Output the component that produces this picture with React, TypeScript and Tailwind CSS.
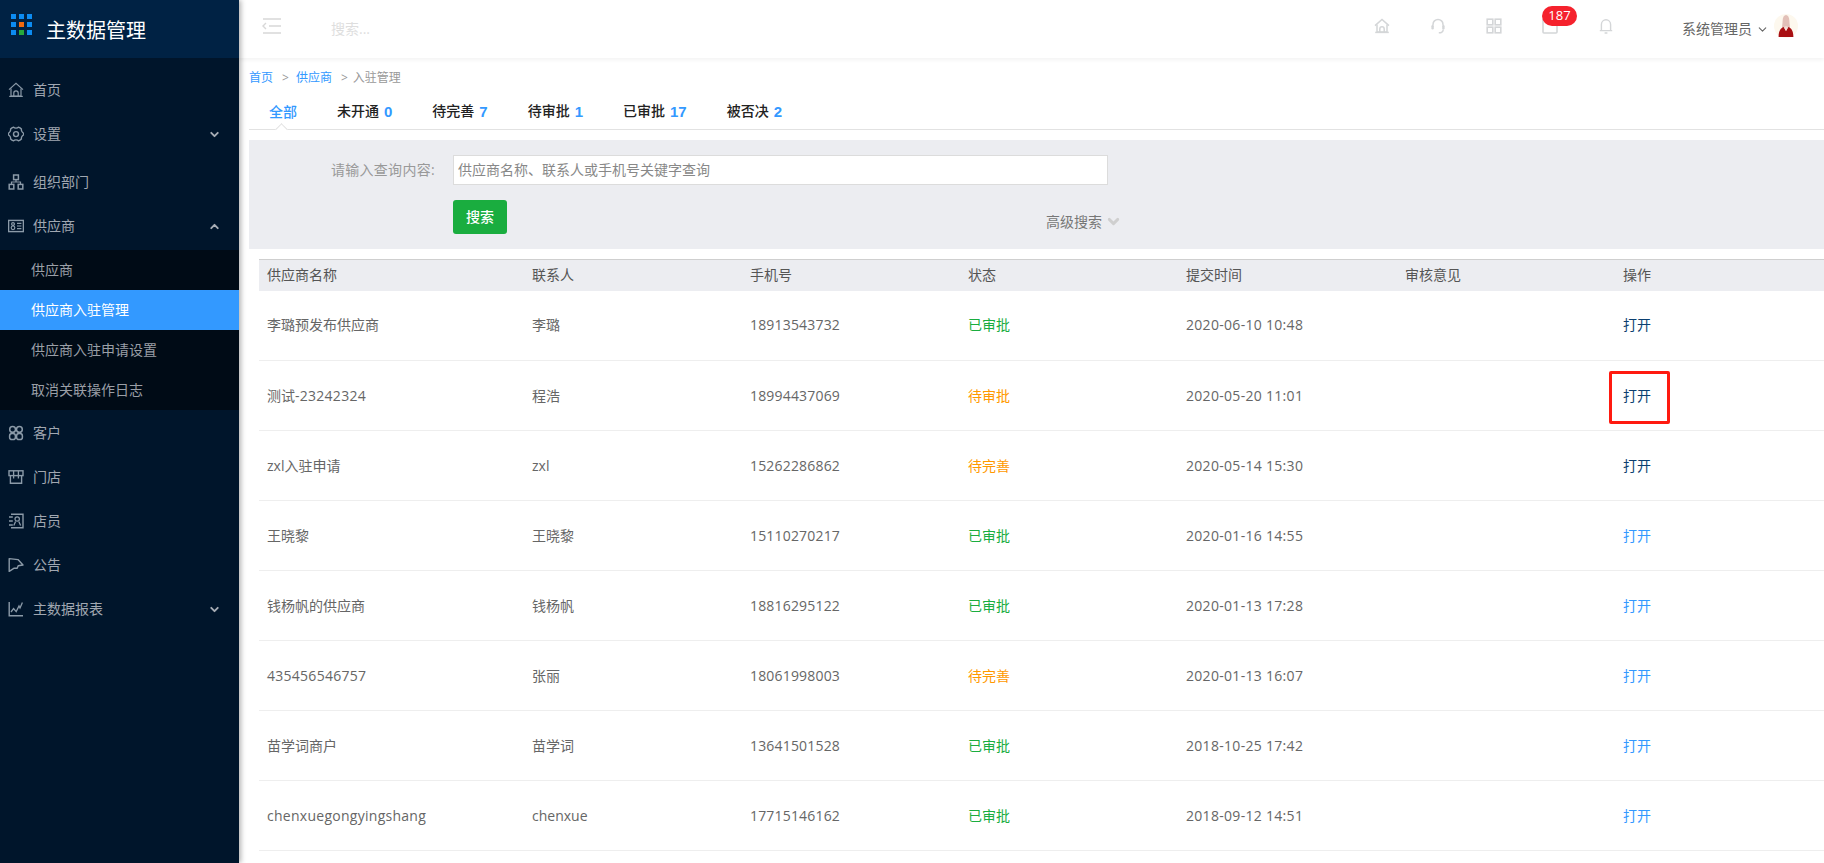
import { ChevronDown, ChevronUp } from "lucide-react"
import type { ReactNode } from "react"

const Ico = ({
    children,
    size = 16,
    weight = 1.2,
    className = ""
}: {
    children: ReactNode
    size?: number
    weight?: number
    className?: string
}) => (
    <svg
        width={size}
        height={size}
        viewBox="0 0 16 16"
        fill="none"
        stroke="currentColor"
        strokeWidth={weight}
        className={className}>
        {children}
    </svg>
)

const HomeIcon = (
    <>
        <path d="M1 7.6 8 1.4l7 6.2" />
        <path d="M3 6.4V14h10V6.4" />
        <path d="M5.8 14v-3a2.2 2.2 0 0 1 4.4 0v3" />
        <path d="M1.2 14.4h13.6" />
    </>
)

const menuIcons = {
    home: HomeIcon,
    gear: (
        <>
            <path
                d="M5.6 1.2c1 1.2 3.8 1.2 4.8 0 1.2.4 2.2 1 3 1.8-.4 1.4 1 3.8 2.2 4.2.1 1 .1 1.6 0 1.6-1.2.4-2.6 2.8-2.2 4.2-.8.8-1.8 1.4-3 1.8-1-1.2-3.8-1.2-4.8 0-1.2-.4-2.2-1-3-1.8.4-1.4-1-3.8-2.2-4.2V7.2C1.6 6.8 3 4.4 2.6 3c.8-.8 1.8-1.4 3-1.8z"
                strokeWidth="1.4"
            />
            <circle cx="8" cy="8.1" r="2.5" strokeWidth="1.4" />
        </>
    ),
    org: (
        <>
            <rect x="5.6" y="1" width="4.8" height="4.6" strokeWidth="1.5" />
            <rect x="1.2" y="10.4" width="4.6" height="4.6" strokeWidth="1.5" />
            <rect x="10.2" y="10.4" width="4.6" height="4.6" strokeWidth="1.5" />
            <path d="M8 5.6V8M3.5 10.4V8h9v2.4" />
        </>
    ),
    card: (
        <>
            <rect x="0.6" y="2.4" width="14.8" height="11.2" strokeWidth="1.4" />
            <circle cx="5" cy="6" r="1.4" />
            <circle cx="5" cy="9.8" r="1.8" />
            <path d="M9 5.4h4.4M9 8h4.4M9 10.6h4.4" />
        </>
    ),
    customer: (
        <>
            <circle cx="4.6" cy="4.4" r="2.9" strokeWidth="1.5" />
            <circle cx="11.4" cy="4.4" r="2.9" strokeWidth="1.5" />
            <rect x="1.6" y="8.6" width="5.8" height="6" rx="2.4" strokeWidth="1.5" />
            <rect x="8.6" y="8.6" width="5.8" height="6" rx="2.4" strokeWidth="1.5" />
        </>
    ),
    store: (
        <>
            <rect x="1" y="1.8" width="14" height="4.8" strokeWidth="1.4" />
            <path d="M5.6 1.8v7.8M10.4 1.8v7.8" strokeWidth="1.3" />
            <path d="M2.4 6.6v7.6h11.2V6.6" strokeWidth="1.4" />
        </>
    ),
    clerk: (
        <>
            <path d="M3 1.2h12v13.6H3" strokeWidth="1.4" />
            <path d="M1 4h3.8M1 8h3.8M1 12h3.8" strokeWidth="1.3" />
            <circle cx="9.2" cy="6" r="2.2" />
            <path d="M5.8 12.4 7.6 8.4M12.6 12.4l-1.8-4" strokeWidth="1.3" />
        </>
    ),
    notice: (
        <>
            <path d="M1.2 1.6v12.8l5-3.2h3l1-2.4L15 8l-5-5.4z" strokeWidth="1.4" strokeLinejoin="round" />
        </>
    ),
    chart: (
        <>
            <path d="M1.2 1v13.8H15" strokeWidth="1.4" />
            <path d="M3 11l2.6-3.4 2.6 3L11 5l1 2 2.4-5.6" strokeWidth="1.3" />
        </>
    )
}

type MenuKey = keyof typeof menuIcons

const MenuRow = ({
    icon,
    label,
    arrow,
    className = ""
}: {
    icon: MenuKey
    label: string
    arrow?: "up" | "down"
    className?: string
}) => (
    <div className={`flex h-[44px] items-center pl-2 pr-[18px] text-sm text-[#a0a7b1] ${className}`}>
        <Ico className="shrink-0 text-[#8b9aa8]">{menuIcons[icon]}</Ico>
        <span className="ml-[9px] flex-1">{label}</span>
        {arrow === "down" && <ChevronDown size={13} strokeWidth={3.5} className="text-[#a7adb5]" />}
        {arrow === "up" && <ChevronUp size={13} strokeWidth={3.5} className="text-[#a7adb5]" />}
    </div>
)

const Sidebar = () => (
    <aside className="z-20 flex h-[863px] w-[239px] shrink-0 flex-col bg-[#00152b] shadow-[2px_0_5px_rgba(0,0,0,0.3)]">
        <div className="flex h-[58px] items-center bg-[#002244] pl-[11px]">
            <svg width="21" height="21" viewBox="0 0 21 21" className="-mt-[10px]">
                {[0, 8, 16].map(y =>
                    [0, 8, 16].map(x => (
                        <rect
                            key={`${x}-${y}`}
                            x={x}
                            y={y}
                            width="5"
                            height="5"
                            fill={x === 8 && y === 8 ? "#f26a0f" : x === 8 && y === 16 ? "#27a93c" : "#0c8cf2"}
                        />
                    ))
                )}
            </svg>
            <span className="ml-[14px] mt-[3px] text-[20px] text-white">主数据管理</span>
        </div>
        <div className="pt-[10px]">
            <MenuRow icon="home" label="首页" />
            <MenuRow icon="gear" label="设置" arrow="down" className="mb-1" />
            <MenuRow icon="org" label="组织部门" />
            <MenuRow icon="card" label="供应商" arrow="up" className="mb-[2px]" />
            <div className="mb-px bg-[#000b16] text-sm text-[#9a9fa6]">
                <div className="flex h-10 items-center pl-[31px]">供应商</div>
                <div className="flex h-10 items-center bg-[#3399ff] pl-[31px] text-white">供应商入驻管理</div>
                <div className="flex h-10 items-center pl-[31px]">供应商入驻申请设置</div>
                <div className="flex h-10 items-center pl-[31px]">取消关联操作日志</div>
            </div>
            <MenuRow icon="customer" label="客户" />
            <MenuRow icon="store" label="门店" />
            <MenuRow icon="clerk" label="店员" />
            <MenuRow icon="notice" label="公告" />
            <MenuRow icon="chart" label="主数据报表" arrow="down" />
        </div>
    </aside>
)

const Avatar = () => (
    <svg width="24" height="24" viewBox="0 0 24 24">
        <circle cx="12" cy="12" r="12" fill="#fdf8ee" />
        <path d="M8.6 7c0-4 1.6-6 3.4-6s3.4 2 3.4 6c0 3 .8 5 .4 7H8.2c-.4-2 .4-4 .4-7z" fill="#e2c0b8" />
        <path d="M4.6 23c0-6 2-9 5-10l2.4 4 2.4-4c3 1 5 4 5 10z" fill="#a80f12" />
        <path d="M10 13l2 4 2-4-2-1z" fill="#f2dcd4" />
    </svg>
)

const TopIcon = ({ children }: { children: ReactNode }) => (
    <div className="relative flex w-14 justify-center text-[#d4d6d8]">{children}</div>
)

const Header = () => (
    <header className="z-10 flex h-[58px] shrink-0 items-center bg-white shadow-[0_2px_4px_rgba(0,0,0,0.05)]">
        <svg width="19" height="16" viewBox="0 0 19 16" fill="none" stroke="#d8d8d8" strokeWidth="1.4" className="-mt-[6px] ml-[23px]">
            <path d="M1 1h18M7 8h12M1 15h18M4 5 1 8l3 3" />
        </svg>
        <span className="ml-[50px] flex-1 text-sm text-[#dedede]">搜索...</span>
        <div className="-mt-[6px] flex items-center">
            <TopIcon>
                <Ico weight={1.5}>{HomeIcon}</Ico>
            </TopIcon>
            <TopIcon>
                <Ico weight={1.5}>
                    <path d="M3 7.4V6.4a5 5 0 0 1 10 0v1" />
                    <rect x="1.4" y="7" width="2.4" height="4.4" rx="1.2" fill="currentColor" stroke="none" />
                    <rect x="12.2" y="7" width="2.4" height="4.4" rx="1.2" fill="currentColor" stroke="none" />
                    <path d="M13.2 11.4c0 2.4-1.8 3.4-4.4 3.4" />
                </Ico>
            </TopIcon>
            <TopIcon>
                <Ico weight={1.6}>
                    <rect x="1.2" y="1.2" width="5.6" height="5.6" />
                    <rect x="9.2" y="1.2" width="5.6" height="5.6" />
                    <rect x="1.2" y="9.2" width="5.6" height="5.6" />
                    <rect x="9.2" y="9.2" width="5.6" height="5.6" />
                </Ico>
            </TopIcon>
            <TopIcon>
                <Ico weight={1.6}>
                    <rect x="1" y="1" width="14" height="14" rx="1" />
                </Ico>
                <span className="absolute -top-[12px] left-5 flex h-5 w-[35px] items-center justify-center rounded-full bg-[#f5222d] text-[13px] text-white">
                    187
                </span>
            </TopIcon>
            <TopIcon>
                <Ico weight={1.4}>
                    <path d="M3.4 12.4V6.4a4.6 4.6 0 0 1 9.2 0v6" />
                    <path d="M1.8 12.6h12.4M6.6 15h2.8" />
                </Ico>
            </TopIcon>
        </div>
        <div className="ml-12 mr-[26px] flex items-center">
            <span className="text-sm text-[#666]">系统管理员</span>
            <ChevronDown size={13} className="ml-[4px] text-[#666]" />
            <div className="-mt-[6px] ml-[5px]">
                <Avatar />
            </div>
        </div>
    </header>
)

const tabs = [
    { label: "全部" },
    { label: "未开通", count: 0 },
    { label: "待完善", count: 7 },
    { label: "待审批", count: 1 },
    { label: "已审批", count: 17 },
    { label: "被否决", count: 2 }
]

const Tabs = () => (
    <div className="relative mt-[11px] flex h-[33px] items-center border-b border-[#e2e2e2] pb-[3px] text-sm font-medium text-[#222]">
        {tabs.map(t => (
            <div key={t.label} className="flex items-center px-5">
                <span className={t.count === undefined ? "text-[#3399ff]" : ""}>{t.label}</span>
                {t.count !== undefined && (
                    <span className="ml-[5px] font-['Liberation_Sans',sans-serif] text-[15px] font-bold text-[#3399ff]">
                        {t.count}
                    </span>
                )}
            </div>
        ))}
        <span className="absolute -bottom-px left-[28px] h-[9px] w-[9px] translate-y-[4px] rotate-45 border-l border-t border-[#e2e2e2] bg-white" />
    </div>
)

const SearchPanel = () => (
    <div className="mt-[10px] h-[109px] bg-[#ecedf1] pt-[15px]">
        <div className="flex items-center">
            <span className="w-[186px] text-right text-sm tracking-[0.3px] text-[#999]">请输入查询内容:</span>
            <div className="ml-[18px] flex h-[30px] w-[655px] items-center border border-[#dcdcdc] bg-white pl-[4px] text-sm text-[#888]">
                供应商名称、联系人或手机号关键字查询
            </div>
        </div>
        <div className="mt-[15px] flex items-center">
            <button className="ml-[204px] h-[34px] w-[54px] rounded-[3px] bg-[#1aad3f] text-sm font-medium text-white">
                搜索
            </button>
            <span className="ml-[539px] mt-[9px] flex items-center text-sm text-[#777]">
                高级搜索
                <ChevronDown size={17} strokeWidth={4} className="ml-[3px] text-[#cfcfcf]" />
            </span>
        </div>
    </div>
)

const rows = [
    ["李璐预发布供应商", "李璐", "18913543732", "已审批", "2020-06-10 10:48"],
    ["测试-23242324", "程浩", "18994437069", "待审批", "2020-05-20 11:01"],
    ["zxl入驻申请", "zxl", "15262286862", "待完善", "2020-05-14 15:30"],
    ["王晓黎", "王晓黎", "15110270217", "已审批", "2020-01-16 14:55"],
    ["钱杨帆的供应商", "钱杨帆", "18816295122", "已审批", "2020-01-13 17:28"],
    ["435456546757", "张丽", "18061998003", "待完善", "2020-01-13 16:07"],
    ["苗学词商户", "苗学词", "13641501528", "已审批", "2018-10-25 17:42"],
    ["chenxuegongyingshang", "chenxue", "17715146162", "已审批", "2018-09-12 14:51"]
]

const statusColor = (s: string) => (s === "已审批" ? "text-[#1aad3f]" : "text-[#ff9900]")

// latin runs are a touch wider in the reference than in the installed font
const Spaced = ({ text }: { text: string }) => (
    <>
        {text.split(/([\x20-\x7e]{4,})/).map((part, i) =>
            i % 2 ? (
                <span key={i} className="tracking-[0.27px]">
                    {part}
                </span>
            ) : (
                part
            )
        )}
    </>
)

const SupplierTable = () => (
    <table className="ml-[10px] mt-[10px] w-[1565px] table-fixed border-collapse text-left text-sm">
        <colgroup>
            <col className="w-[265px]" />
            <col className="w-[218px]" />
            <col className="w-[218px]" />
            <col className="w-[218px]" />
            <col className="w-[219px]" />
            <col className="w-[218px]" />
            <col />
        </colgroup>
        <thead>
            <tr className="h-[31px] border-t border-[#cfcfcf] bg-[#ecedf1] text-[#555]">
                {["供应商名称", "联系人", "手机号", "状态", "提交时间", "审核意见", "操作"].map(h => (
                    <th key={h} className="pl-2 font-normal">
                        {h}
                    </th>
                ))}
            </tr>
        </thead>
        <tbody>
            {rows.map((r, i) => (
                <tr key={r[2]} className="h-[70px] border-b border-[#eeeeee] text-[#666]">
                    <td className="pl-2">
                        <Spaced text={r[0]} />
                    </td>
                    <td className="pl-2">{r[1]}</td>
                    <td className="pl-2 tracking-[0.18px]">{r[2]}</td>
                    <td className={`pl-2 ${statusColor(r[3])}`}>{r[3]}</td>
                    <td className="pl-2 tracking-[0.3px]">{r[4]}</td>
                    <td className="pl-2" />
                    <td className={`relative pl-2 ${i < 3 ? "text-[#0b3f70]" : "text-[#3399ff]"}`}>
                        打开
                        {i === 1 && (
                            <span className="absolute left-[-6px] top-[10px] h-[53px] w-[61px] rounded-[2px] border-[3px] border-[#ff1a10]" />
                        )}
                    </td>
                </tr>
            ))}
        </tbody>
    </table>
)

export default function App() {
    return (
        <div className="flex h-[863px] w-[1824px] overflow-hidden bg-white font-['Open_Sans','Noto_Sans_CJK_SC',sans-serif]">
            <Sidebar />
            <div className="flex min-w-0 flex-1 flex-col">
                <Header />
                <main className="min-h-0 flex-1 overflow-hidden pl-[10px]">
                    <div className="mt-[12px] flex h-4 items-center text-xs text-[#999]">
                        <span className="text-[#3399ff]">首页</span>
                        <span className="ml-[9px] mr-[7px]">&gt;</span>
                        <span className="text-[#3399ff]">供应商</span>
                        <span className="ml-[9px] mr-[5px]">&gt;</span>
                        <span>入驻管理</span>
                    </div>
                    <Tabs />
                    <SearchPanel />
                    <SupplierTable />
                </main>
            </div>
        </div>
    )
}
